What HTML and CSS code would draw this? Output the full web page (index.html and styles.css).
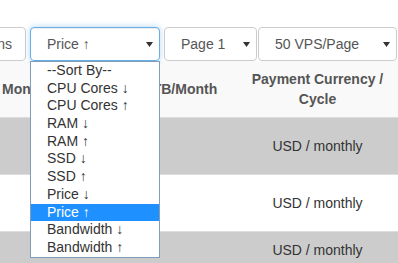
FILE: index.html
```html
<!DOCTYPE html>
<html>
<head>
    <title>VPS Comparison</title>
    <meta charset="UTF-8">
    <meta name="viewport" content="width=device-width, initial-scale=1.0">
    <link rel="stylesheet" href="styles.css">
</head>
<body>
    <div class="page">
        <div class="filters">
            <div class="field field-location">Locations</div>

            <div class="field field-sort focused">
                <span>Price ↑</span>
                <svg class="caret" width="7" height="5" viewBox="0 0 7 5"><path d="M0 0H7L3.5 5Z" fill="#333"/></svg>

                <ul class="menu">
                    <li>--Sort By--</li>
                    <li>CPU Cores ↓</li>
                    <li>CPU Cores ↑</li>
                    <li>RAM ↓</li>
                    <li>RAM ↑</li>
                    <li>SSD ↓</li>
                    <li>SSD ↑</li>
                    <li>Price ↓</li>
                    <li class="selected">Price ↑</li>
                    <li>Bandwidth ↓</li>
                    <li>Bandwidth ↑</li>
                </ul>
            </div>

            <div class="field field-page">
                <span>Page 1</span>
                <svg class="caret" width="7" height="5" viewBox="0 0 7 5"><path d="M0 0H7L3.5 5Z" fill="#333"/></svg>
            </div>

            <div class="field field-perpage">
                <span>50 VPS/Page</span>
                <svg class="caret" width="7" height="5" viewBox="0 0 7 5"><path d="M0 0H7L3.5 5Z" fill="#333"/></svg>
            </div>
        </div>

        <table class="plans">
            <colgroup>
                <col class="col-price">
                <col class="col-traffic">
                <col class="col-payment">
                <col class="col-location">
            </colgroup>
            <thead>
                <tr>
                    <th>Price / Month</th>
                    <th>Traffic TB/Month</th>
                    <th>Payment Currency / Cycle</th>
                    <th>Location</th>
                </tr>
            </thead>
            <tbody>
                <tr class="alt">
                    <td></td>
                    <td></td>
                    <td>USD / monthly</td>
                    <td>Los Angeles, CA<br>United States</td>
                </tr>
                <tr>
                    <td></td>
                    <td></td>
                    <td>USD / monthly</td>
                    <td>Dallas, TX<br>United States</td>
                </tr>
                <tr class="alt">
                    <td></td>
                    <td></td>
                    <td>USD / monthly</td>
                    <td>Amsterdam</td>
                </tr>
            </tbody>
        </table>
    </div>
</body>
</html>
```

FILE: styles.css
```css
* {
    margin: 0;
    padding: 0;
    box-sizing: border-box;
}

body {
    font-family: 'Liberation Sans', Arial, sans-serif;
    font-size: 14px;
    color: #333;
    background: #fff;
    overflow: hidden;
}

.page {
    margin-left: -87px;
    width: 700px;
}

/* filter bar */
.filters {
    display: flex;
    padding-top: 27px;
    padding-left: 22px;
}

.field {
    position: relative;
    display: flex;
    align-items: center;
    justify-content: space-between;
    height: 34px;
    padding: 0 6px 0 16px;
    border: 1px solid #ccc;
    border-radius: 4px;
    color: #555;
    background: #fff;
    line-height: 20px;
    white-space: nowrap;
}

.field-location {
    width: 91px;
    margin-right: 4px;
}

.field-sort {
    width: 130px;
    margin-right: 4px;
}

.field-page {
    width: 93px;
    margin-right: 1px;
}

.field-perpage {
    width: 139px;
}

.field.focused {
    border-color: #66afe9;
    box-shadow: inset 0 1px 1px rgba(0, 0, 0, 0.075), 0 0 6px rgba(102, 175, 233, 0.5);
}

.caret {
    display: block;
    flex-shrink: 0;
}

/* open dropdown */
.menu {
    position: absolute;
    top: calc(100% + 1px);
    left: -1px;
    width: 130px;
    list-style: none;
    background: #fff;
    border: 1px solid #7f9db9;
    z-index: 10;
}

.menu li {
    height: 17.7px;
    line-height: 17.7px;
    padding-left: 16px;
    color: #333;
}

.menu li.selected {
    background: #1e90ff;
    color: #fff;
}

/* results table */
.plans {
    border-collapse: collapse;
    table-layout: fixed;
    width: 685px;
}

.col-price { width: 174px; }
.col-traffic { width: 150px; }
.col-payment { width: 161px; }
.col-location { width: 200px; }

.plans th {
    background: #f9f9f9;
    color: #555;
    font-weight: bold;
    text-align: center;
    vertical-align: middle;
    padding: 8px;
    line-height: 20px;
}

.plans td {
    border-top: 1px solid #ddd;
    text-align: center;
    vertical-align: middle;
    padding: 8px;
    line-height: 20px;
}

.plans tr.alt td {
    background: #ccc;
}
```
